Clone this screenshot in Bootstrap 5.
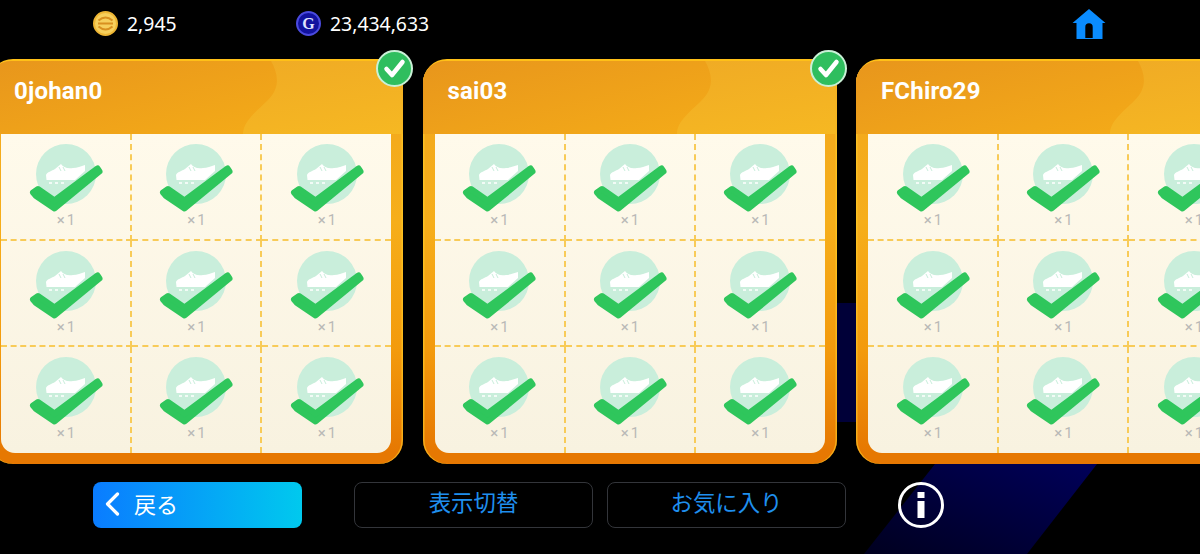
<!DOCTYPE html>
<html lang="ja">
<head>
<meta charset="utf-8">
<title>Select</title>
<link href="https://cdn.jsdelivr.net/npm/bootstrap@5.3.0/dist/css/bootstrap.min.css" rel="stylesheet">
<style>
html,body{height:100%;overflow:hidden;background:#000;}
body{font-family:"Noto Sans","Noto Sans CJK JP",sans-serif;}
.pg-wrap{width:1200px;height:554px;overflow:hidden;}
.pg-bg{inset:0;z-index:0;}
.pg-layer{z-index:1;}
.top-strip{height:59px;padding:11px 94px 0 93px;}
.money{color:#fff;font-size:19.4px;line-height:1;gap:9px;}
.money-a{width:203px;}
.money-b{gap:9px;}
.home-mark{margin-top:-3px;}
.deck{margin-left:-11px;gap:19.5px;width:1400px;}
.slot{width:414px;height:405px;flex:none;border-radius:24px;padding:0 12px 11px;
 background:linear-gradient(180deg,#f2a81e 0%,#f6ae1a 40%,#f39a0c 72%,#e67802 97%);
 border-top:2px solid #ffc018;box-shadow:inset 1.5px 0 0 rgba(255,205,40,.6),inset -1.5px 0 0 rgba(255,205,40,.6);}
.slot-head{height:73px;margin:0 -12px;padding:0 0 0 25px;border-radius:22px 22px 0 0;overflow:hidden;}
.slot-wave{inset:0;width:100%;height:100%;}
.slot-name{z-index:1;font-family:Roboto,sans-serif;font-weight:700;font-size:24px;letter-spacing:.2px;line-height:1;color:#fff;margin-top:-13px;}
.tick-badge{top:-11px;right:-10px;width:37px;height:37px;z-index:3;}
.ticket{width:390px;height:319px;display:grid;grid-template-columns:131px 130px 129px;grid-template-rows:107px 106px 106px;
 border-radius:0 0 14px 14px;overflow:hidden;background:linear-gradient(180deg,#fffaeb,#f8f2e0);}
.ticket-cell{border-right:2px dashed #f8cb58;border-bottom:2px dashed #f8cb58;}
.ticket-cell:nth-child(3n){border-right:0;}
.ticket-cell:nth-child(n+7){border-bottom:0;}
.cell-art{display:block;width:130px;height:78px;flex:none;}
.cell-qty{font-family:Roboto,sans-serif;font-size:15px;line-height:16px;color:#b9b9b7;letter-spacing:2px;margin-left:3px;}
.foot-strip{margin-top:18px;padding-left:93px;}
.btn-back{width:209px;height:46px;border:0;border-radius:8px;background:linear-gradient(90deg,#0a7cff,#00c9ee);color:#fff;font-size:22px;line-height:1;padding:0 0 3px 12px;gap:14px;}
.btn-back:hover{color:#fff;background:linear-gradient(90deg,#0a7cff,#00c9ee);}
.btn-ghost{width:239px;height:46px;border:1.5px solid #33353a;border-radius:8px;background:transparent;color:#1f8fee;font-size:22.4px;line-height:1;padding:0 0 3px;}
.btn-ghost:hover{color:#1f8fee;border-color:#33353a;}
.ms-b{margin-left:52px;}
.ms-c{margin-left:14px;}
.info-mark{margin-left:52px;width:46px;height:46px;}
</style>
</head>
<body class="m-0">
<svg width="0" height="0" class="position-absolute">
 <symbol id="art" viewBox="0 0 130 78">
  <circle cx="65" cy="40" r="30" fill="#c9eedb"/>
  <path fill="#fff" d="M45.5 46 45 41C46 38 51 37 54 35L60 30C62 33 66 35 72 34 76 34 80 32 84 31V37L74 46Z"/>
  <path stroke="#c9eedb" stroke-width="1" d="M58 33 60 37M62 33 64 37"/>
  <path stroke="#fff" stroke-width="1.4" stroke-dasharray="3 3" d="M48 49H66"/>
  <path fill="#2fc65c" stroke="#2fc65c" stroke-width="6" stroke-linejoin="round" d="M37 55 32 58.5 35 62 53.5 74.5 98.5 37.5 96.5 34.5 53.5 66.5Z"/>
 </symbol>
</svg>
<div class="pg-wrap position-relative">
 <svg class="pg-bg position-absolute" width="1200" height="554" viewBox="0 0 1200 554">
  <defs><linearGradient id="bgr" x1="0" x2="1" y1="1" y2="0"><stop offset="0" stop-color="#00001f"/><stop offset="1" stop-color="#00005a"/></linearGradient></defs>
  <polygon fill="url(#bgr)" points="935,464 1097,464 1027,554 864,554"/>
  <rect x="830" y="303" width="40" height="119" fill="#000038"/>
 </svg>
 <div class="pg-layer position-relative">
  <div class="top-strip d-flex align-items-start">
   <div class="money money-a d-flex align-items-center">
    <svg width="25" height="25" viewBox="0 0 25 25"><circle cx="12.5" cy="12.5" r="11.5" fill="#f6cf5c" stroke="#eeb634" stroke-width="2"/><path fill="none" stroke="#d8901f" stroke-width="2" d="M5.5 9.5Q12.5 3.5 19.5 9.5M5 12.5H20M5.5 15.5Q12.5 21.5 19.5 15.5"/></svg>
    <span>2,945</span>
   </div>
   <div class="money money-b d-flex align-items-center">
    <svg width="25" height="25" viewBox="0 0 25 25"><circle cx="12.5" cy="12.5" r="11.5" fill="#12129e" stroke="#4a4ade" stroke-width="2"/><text x="12.5" y="18" text-anchor="middle" font-family="Liberation Serif" font-weight="700" font-size="16" fill="#dfe2ff">G</text></svg>
    <span>23,434,633</span>
   </div>
   <svg class="ms-auto home-mark" width="34" height="32" viewBox="0 0 34 32"><path fill="#0a8cff" fill-rule="evenodd" d="M17 1 33.5 15H30.5V31H4.5V15H.5ZM13.3 30H20.7V19A3.7 3.7 0 0 0 13.3 19Z"/></svg>
  </div>

  <div class="deck d-flex">
   <!-- card 1 -->
   <div class="slot position-relative">
    <div class="slot-head position-relative d-flex align-items-center">
     <svg class="slot-wave position-absolute" viewBox="0 0 414 73" preserveAspectRatio="none"><defs><linearGradient id="hd" x1="0" x2="1" y1="0" y2="1"><stop offset="0" stop-color="#e8961c"/><stop offset="1" stop-color="#f4ab18"/></linearGradient><linearGradient id="hr" x1="0" x2="1" y1="0" y2="1"><stop offset="0" stop-color="#eda526"/><stop offset="1" stop-color="#f6b822"/></linearGradient></defs><rect width="414" height="73" fill="url(#hr)"/><path fill="url(#hd)" d="M0 0H282C290 14 291 28 278 40 268 50 254 60 254 73H0Z"/></svg>
     <span class="slot-name position-relative">0johan0</span>
    </div>
    <svg class="tick-badge position-absolute" viewBox="0 0 37 37"><circle cx="18.5" cy="18.5" r="17.5" fill="#2fbe5e" stroke="#c9f0d6" stroke-width="2"/><path fill="none" stroke="#fff" stroke-width="4.5" stroke-linecap="round" stroke-linejoin="round" d="M10.5 19 16 25 26.5 12"/></svg>
    <div class="ticket">
     <div class="ticket-cell d-flex flex-column align-items-center"><svg class="cell-art"><use href="#art"/></svg><span class="cell-qty">×1</span></div>
     <div class="ticket-cell d-flex flex-column align-items-center"><svg class="cell-art"><use href="#art"/></svg><span class="cell-qty">×1</span></div>
     <div class="ticket-cell d-flex flex-column align-items-center"><svg class="cell-art"><use href="#art"/></svg><span class="cell-qty">×1</span></div>
     <div class="ticket-cell d-flex flex-column align-items-center"><svg class="cell-art"><use href="#art"/></svg><span class="cell-qty">×1</span></div>
     <div class="ticket-cell d-flex flex-column align-items-center"><svg class="cell-art"><use href="#art"/></svg><span class="cell-qty">×1</span></div>
     <div class="ticket-cell d-flex flex-column align-items-center"><svg class="cell-art"><use href="#art"/></svg><span class="cell-qty">×1</span></div>
     <div class="ticket-cell d-flex flex-column align-items-center"><svg class="cell-art"><use href="#art"/></svg><span class="cell-qty">×1</span></div>
     <div class="ticket-cell d-flex flex-column align-items-center"><svg class="cell-art"><use href="#art"/></svg><span class="cell-qty">×1</span></div>
     <div class="ticket-cell d-flex flex-column align-items-center"><svg class="cell-art"><use href="#art"/></svg><span class="cell-qty">×1</span></div>
    </div>
   </div>
   <!-- card 2 -->
   <div class="slot position-relative">
    <div class="slot-head position-relative d-flex align-items-center">
     <svg class="slot-wave position-absolute" viewBox="0 0 414 73" preserveAspectRatio="none"><rect width="414" height="73" fill="url(#hr)"/><path fill="url(#hd)" d="M0 0H282C290 14 291 28 278 40 268 50 254 60 254 73H0Z"/></svg>
     <span class="slot-name position-relative">sai03</span>
    </div>
    <svg class="tick-badge position-absolute" viewBox="0 0 37 37"><circle cx="18.5" cy="18.5" r="17.5" fill="#2fbe5e" stroke="#c9f0d6" stroke-width="2"/><path fill="none" stroke="#fff" stroke-width="4.5" stroke-linecap="round" stroke-linejoin="round" d="M10.5 19 16 25 26.5 12"/></svg>
    <div class="ticket">
     <div class="ticket-cell d-flex flex-column align-items-center"><svg class="cell-art"><use href="#art"/></svg><span class="cell-qty">×1</span></div>
     <div class="ticket-cell d-flex flex-column align-items-center"><svg class="cell-art"><use href="#art"/></svg><span class="cell-qty">×1</span></div>
     <div class="ticket-cell d-flex flex-column align-items-center"><svg class="cell-art"><use href="#art"/></svg><span class="cell-qty">×1</span></div>
     <div class="ticket-cell d-flex flex-column align-items-center"><svg class="cell-art"><use href="#art"/></svg><span class="cell-qty">×1</span></div>
     <div class="ticket-cell d-flex flex-column align-items-center"><svg class="cell-art"><use href="#art"/></svg><span class="cell-qty">×1</span></div>
     <div class="ticket-cell d-flex flex-column align-items-center"><svg class="cell-art"><use href="#art"/></svg><span class="cell-qty">×1</span></div>
     <div class="ticket-cell d-flex flex-column align-items-center"><svg class="cell-art"><use href="#art"/></svg><span class="cell-qty">×1</span></div>
     <div class="ticket-cell d-flex flex-column align-items-center"><svg class="cell-art"><use href="#art"/></svg><span class="cell-qty">×1</span></div>
     <div class="ticket-cell d-flex flex-column align-items-center"><svg class="cell-art"><use href="#art"/></svg><span class="cell-qty">×1</span></div>
    </div>
   </div>
   <!-- card 3 -->
   <div class="slot position-relative">
    <div class="slot-head position-relative d-flex align-items-center">
     <svg class="slot-wave position-absolute" viewBox="0 0 414 73" preserveAspectRatio="none"><rect width="414" height="73" fill="url(#hr)"/><path fill="url(#hd)" d="M0 0H282C290 14 291 28 278 40 268 50 254 60 254 73H0Z"/></svg>
     <span class="slot-name position-relative">FChiro29</span>
    </div>
    <div class="ticket">
     <div class="ticket-cell d-flex flex-column align-items-center"><svg class="cell-art"><use href="#art"/></svg><span class="cell-qty">×1</span></div>
     <div class="ticket-cell d-flex flex-column align-items-center"><svg class="cell-art"><use href="#art"/></svg><span class="cell-qty">×1</span></div>
     <div class="ticket-cell d-flex flex-column align-items-center"><svg class="cell-art"><use href="#art"/></svg><span class="cell-qty">×1</span></div>
     <div class="ticket-cell d-flex flex-column align-items-center"><svg class="cell-art"><use href="#art"/></svg><span class="cell-qty">×1</span></div>
     <div class="ticket-cell d-flex flex-column align-items-center"><svg class="cell-art"><use href="#art"/></svg><span class="cell-qty">×1</span></div>
     <div class="ticket-cell d-flex flex-column align-items-center"><svg class="cell-art"><use href="#art"/></svg><span class="cell-qty">×1</span></div>
     <div class="ticket-cell d-flex flex-column align-items-center"><svg class="cell-art"><use href="#art"/></svg><span class="cell-qty">×1</span></div>
     <div class="ticket-cell d-flex flex-column align-items-center"><svg class="cell-art"><use href="#art"/></svg><span class="cell-qty">×1</span></div>
     <div class="ticket-cell d-flex flex-column align-items-center"><svg class="cell-art"><use href="#art"/></svg><span class="cell-qty">×1</span></div>
    </div>
   </div>
  </div>

  <div class="foot-strip d-flex align-items-center">
   <button type="button" class="btn btn-back d-flex align-items-center">
    <svg width="15" height="24" viewBox="0 0 15 24"><path fill="none" stroke="#fff" stroke-width="3.2" stroke-linecap="round" stroke-linejoin="round" d="M12.5 2 2.5 12 12.5 22"/></svg>
    <span>戻る</span>
   </button>
   <button type="button" class="btn btn-ghost ms-b">表示切替</button>
   <button type="button" class="btn btn-ghost ms-c">お気に入り</button>
   <svg class="info-mark" viewBox="0 0 46 46"><circle cx="23" cy="23" r="21.5" fill="none" stroke="#fff" stroke-width="3"/><rect x="19.5" y="10" width="7" height="6" fill="#fff"/><rect x="19.5" y="19" width="7" height="17" fill="#fff"/></svg>
  </div>
 </div>
</div>
<script src="https://cdn.jsdelivr.net/npm/bootstrap@5.3.0/dist/js/bootstrap.bundle.min.js"></script>
</body>
</html>
